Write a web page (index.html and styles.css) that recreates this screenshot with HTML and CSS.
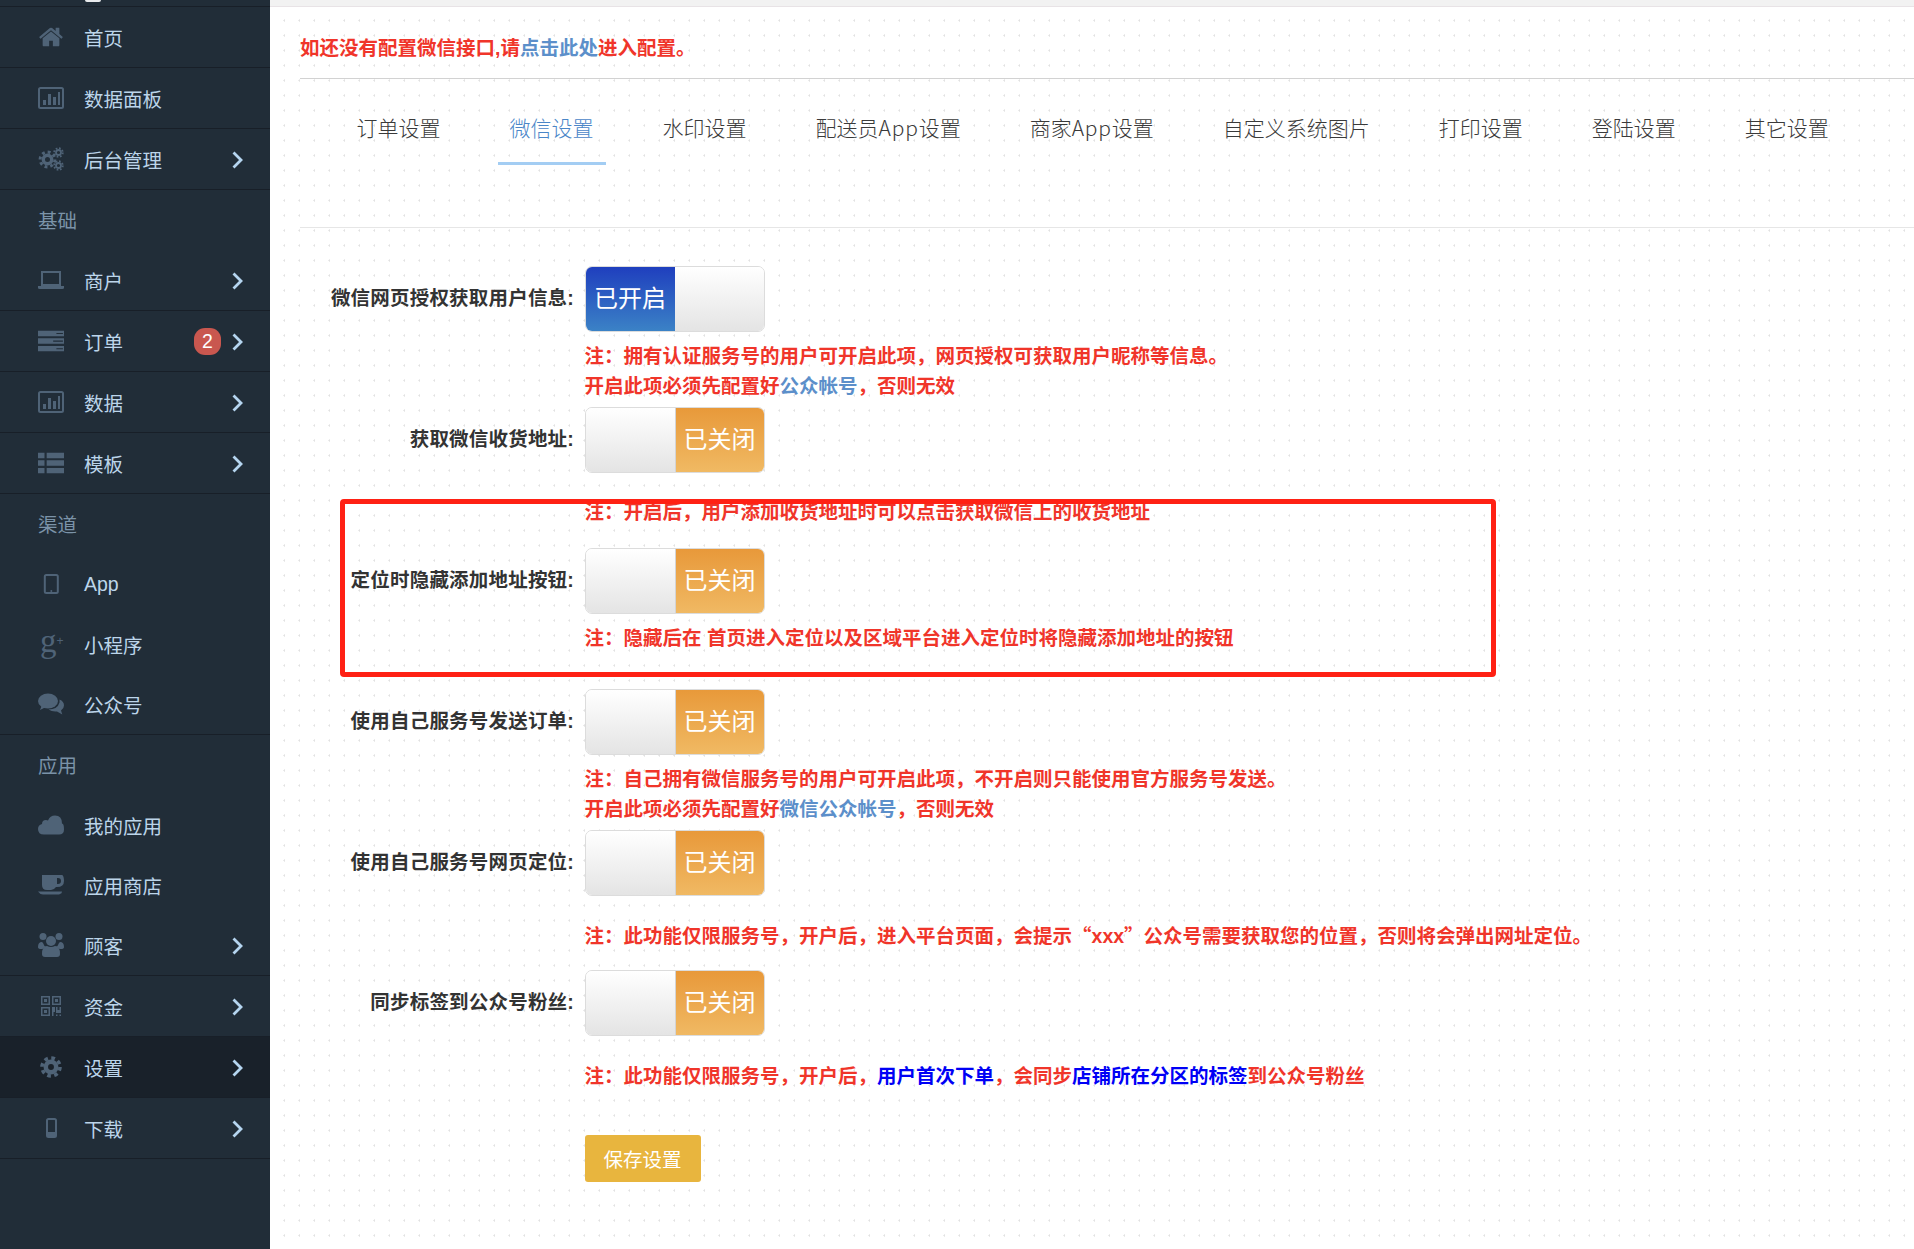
FILE: index.html
```html
<!DOCTYPE html>
<html lang="zh-CN">
<head>
<meta charset="utf-8">
<title>微信设置</title>
<link rel="stylesheet" href="styles.css">
</head>
<body>
<aside class="sidebar">
  <div class="side-top"><span class="avatar-sliver"></span></div>
  <a class="item b">
    <svg class="ico" viewBox="0 0 1792 1792"><path d="M1472 992v480q0 26-19 45t-45 19h-384v-384h-256v384h-384q-26 0-45-19t-19-45v-480q0-1 .5-3t.5-3l575-474 575 474q1 2 1 6zm223-69l-62 74q-8 9-21 11h-3q-13 0-21-7l-692-577-692 577q-12 8-24 7-13-2-21-11l-62-74q-8-10-7-23.5t11-21.5l719-599q32-26 76-26t76 26l244 204v-195q0-14 9-23t23-9h192q14 0 23 9t9 23v408l219 182q10 8 11 21.5t-7 23.5z"/></svg>
    <span>首页</span>
  </a>
  <a class="item b">
    <svg class="ico" viewBox="0 0 26 22"><rect x="1" y="1" width="24" height="20" rx="1.5" fill="none" stroke="currentColor" stroke-width="2"/><rect x="5" y="13" width="3" height="5"/><rect x="10" y="7" width="3" height="11"/><rect x="15" y="10" width="3" height="8"/><rect x="20" y="5" width="2" height="13"/></svg>
    <span>数据面板</span>
  </a>
  <a class="item b">
    <svg class="ico" viewBox="0 0 26 24"><g fill="none" stroke="currentColor"><circle cx="9.5" cy="12.5" r="4.2" stroke-width="3.4"/><circle cx="9.5" cy="12.5" r="7.4" stroke-width="3" stroke-dasharray="2.9 2.9"/><circle cx="20.500" cy="5.5" r="2.500" stroke-width="1.800"/><circle cx="20.500" cy="5.5" r="4.300" stroke-width="1.800" stroke-dasharray="1.700 1.680"/><circle cx="20.500" cy="18.5" r="2.500" stroke-width="1.800"/><circle cx="20.500" cy="18.5" r="4.300" stroke-width="1.800" stroke-dasharray="1.700 1.680"/></g></svg>
    <span>后台管理</span>
    <svg class="chev" viewBox="0 0 11 18"><polyline points="1.5,1.5 9,9 1.5,16.5"/></svg>
  </a>
  <div class="group-label">基础</div>
  <a class="item b">
    <svg class="ico" viewBox="0 0 26 18"><rect x="4" y="1" width="18" height="13" fill="none" stroke="currentColor" stroke-width="2"/><path d="M0 15h26v1.5q0 1.5-1.5 1.5h-23q-1.5 0-1.5-1.5z"/></svg>
    <span>商户</span>
    <svg class="chev" viewBox="0 0 11 18"><polyline points="1.5,1.5 9,9 1.5,16.5"/></svg>
  </a>
  <a class="item b">
    <svg class="ico" viewBox="0 0 24 19"><path d="M0 0h24v5h-24zM0 7h24v5h-24zM0 14h24v5h-24z"/><path d="M17 2.6h6M14 9.6h9M17 16.6h6" stroke="#212d38" stroke-width="1"/></svg>
    <span>订单</span>
    <span class="badge">2</span>
    <svg class="chev tight" viewBox="0 0 11 18"><polyline points="1.5,1.5 9,9 1.5,16.5"/></svg>
  </a>
  <a class="item b">
    <svg class="ico" viewBox="0 0 26 22"><rect x="1" y="1" width="24" height="20" rx="1.5" fill="none" stroke="currentColor" stroke-width="2"/><rect x="5" y="13" width="3" height="5"/><rect x="10" y="7" width="3" height="11"/><rect x="15" y="10" width="3" height="8"/><rect x="20" y="5" width="2" height="13"/></svg>
    <span>数据</span>
    <svg class="chev" viewBox="0 0 11 18"><polyline points="1.5,1.5 9,9 1.5,16.5"/></svg>
  </a>
  <a class="item b">
    <svg class="ico" viewBox="0 0 24 19"><path d="M0 0h6v5h-6zM8 0h16v5h-16zM0 7h6v5h-6zM8 7h16v5h-16zM0 14h6v5h-6zM8 14h16v5h-16z"/></svg>
    <span>模板</span>
    <svg class="chev" viewBox="0 0 11 18"><polyline points="1.5,1.5 9,9 1.5,16.5"/></svg>
  </a>
  <div class="group-label">渠道</div>
  <a class="item">
    <svg class="ico" viewBox="0 0 26 20"><rect x="6.8" y="1" width="13" height="18" rx="1.5" fill="none" stroke="currentColor" stroke-width="2"/><circle cx="13.3" cy="17" r="1"/></svg>
    <span>App</span>
  </a>
  <a class="item">
    <span class="gplus">g<small>+</small></span>
    <span>小程序</span>
  </a>
  <a class="item b">
    <svg class="ico" viewBox="0 0 26 22"><ellipse cx="10" cy="8" rx="10" ry="7.5"/><path d="M4 12l-2 5 6-3z"/><path d="M21.5 6.6q4.5 2 4.5 5.9 0 3-3 5l1.300 4-5.300-3q-5 .5-8.500-2 9 0 11-7z"/></svg>
    <span>公众号</span>
  </a>
  <div class="group-label">应用</div>
  <a class="item">
    <svg class="ico" viewBox="0 0 26 20"><path d="M6 19.500q-6 0-6-5.500 0-4 4-5 0-4 4-4 1 0 2 .5 2-5 7-5 7 0 7 8 2 0 2 6 0 5-5 5z"/></svg>
    <span>我的应用</span>
  </a>
  <a class="item">
    <svg class="ico" viewBox="0 0 26 20"><path fill-rule="evenodd" d="M4 0h20q1 0 1.500 2t.500 4q0 6-7 6h-1q-2 3-5 3h-4q-5 0-5-5zM19 3v6h1q3 0 3-3t-3-3z"/><path d="M0 16.500h24q0 2-2 2.500-1 .500-2 .500h-15q-3 0-5-3z"/></svg>
    <span>应用商店</span>
  </a>
  <a class="item b">
    <svg class="ico" viewBox="0 0 26 24"><circle cx="5" cy="3.500" r="3.500"/><circle cx="21" cy="3.500" r="3.500"/><circle cx="13" cy="8" r="5"/><path d="M0 14q0-5 4-5l1 1q1 3 3 4-3 1-3.500 2-4.500.500-4.500-2zM26 14q0-5-4-5l-1 1q-1 3-3 4 3 1 3.500 2 4.500.500 4.500-2z"/><path d="M4 21q0-8 5-8 4 2 8 0 5 0 5 8 0 3-3 3h-12q-3 0-3-3z"/></svg>
    <span>顾客</span>
    <svg class="chev" viewBox="0 0 11 18"><polyline points="1.5,1.5 9,9 1.5,16.5"/></svg>
  </a>
  <a class="item b">
    <svg class="ico qr" viewBox="0 0 20 20"><path fill-rule="evenodd" d="M0 0h9v9h-9zM1.500 1.500v6h6v-6zM11 0h9v9h-9zM12.500 1.500v6h6v-6zM0 11h9v9h-9zM1.500 12.500v6h6v-6zM3 3h3v3h-3zM14 3h3v3h-3zM3 14h3v3h-3zM11 11h3v5h-1.500v4h-1.500zM15 11h1.500v3h2v-3h1.500v6h-5zM15 18.500h1.500v1.500h-1.500zM18.500 18.500h1.500v1.500h-1.500z"/></svg>
    <span>资金</span>
    <svg class="chev" viewBox="0 0 11 18"><polyline points="1.5,1.5 9,9 1.5,16.5"/></svg>
  </a>
  <a class="item b active">
    <svg class="ico" viewBox="0 0 26 22"><g fill="none" stroke="currentColor"><circle cx="13" cy="11" r="5.200" stroke-width="4.500"/><circle cx="13" cy="11" r="9" stroke-width="3.600" stroke-dasharray="3.700 3.370"/></g></svg>
    <span>设置</span>
    <svg class="chev" viewBox="0 0 11 18"><polyline points="1.5,1.5 9,9 1.5,16.5"/></svg>
  </a>
  <a class="item b">
    <svg class="ico" viewBox="0 0 26 20"><rect x="9" y="1" width="9" height="18" rx="1.500" fill="none" stroke="currentColor" stroke-width="2"/><rect x="9" y="14" width="9" height="5" rx="1"/></svg>
    <span>下载</span>
    <svg class="chev" viewBox="0 0 11 18"><polyline points="1.5,1.5 9,9 1.5,16.5"/></svg>
  </a>
</aside>

<main class="main">
  <div class="strip"></div>
  <div class="content">
    <p class="notice">如还没有配置微信接口,请<a class="link">点击此处</a>进入配置。</p>
    <nav class="tabs">
      <a class="tab">订单设置</a>
      <a class="tab on">微信设置</a>
      <a class="tab">水印设置</a>
      <a class="tab">配送员<span class="lat">App</span>设置</a>
      <a class="tab">商家<span class="lat">App</span>设置</a>
      <a class="tab">自定义系统图片</a>
      <a class="tab">打印设置</a>
      <a class="tab">登陆设置</a>
      <a class="tab">其它设置</a>
    </nav>
    <form class="form">
      <div class="group">
        <label class="lab">微信网页授权获取用户信息:</label>
        <div class="switch"><span class="seg on-seg">已开启</span><span class="seg blank"></span></div>
        <div class="note"><p>注&#xFF1A;拥有认证服务号的用户可开启此项&#xFF0C;网页授权可获取用户昵称等信息。</p><p>开启此项必须先配置好<a class="link">公众帐号</a>&#xFF0C;否则无效</p></div>
      </div>
      <div class="group">
        <label class="lab">获取微信收货地址:</label>
        <div class="switch"><span class="seg blank off-blank"></span><span class="seg off-seg">已关闭</span></div>
        <div class="note gap"><p>注&#xFF1A;开启后&#xFF0C;用户添加收货地址时可以点击获取微信上的收货地址</p></div>
      </div>
      <div class="group">
        <label class="lab">定位时隐藏添加地址按钮:</label>
        <div class="switch"><span class="seg blank off-blank"></span><span class="seg off-seg">已关闭</span></div>
        <div class="note"><p>注&#xFF1A;隐藏后在 首页进入定位以及区域平台进入定位时将隐藏添加地址的按钮</p></div>
      </div>
      <div class="group">
        <label class="lab">使用自己服务号发送订单:</label>
        <div class="switch"><span class="seg blank off-blank"></span><span class="seg off-seg">已关闭</span></div>
        <div class="note"><p>注&#xFF1A;自己拥有微信服务号的用户可开启此项&#xFF0C;不开启则只能使用官方服务号发送。</p><p>开启此项必须先配置好<a class="link">微信公众帐号</a>&#xFF0C;否则无效</p></div>
      </div>
      <div class="group">
        <label class="lab">使用自己服务号网页定位:</label>
        <div class="switch"><span class="seg blank off-blank"></span><span class="seg off-seg">已关闭</span></div>
        <div class="note gap"><p>注&#xFF1A;此功能仅限服务号&#xFF0C;开户后&#xFF0C;进入平台页面&#xFF0C;会提示<span class="cjk">&#x201C;</span>xxx<span class="cjk">&#x201D;</span>公众号需要获取您的位置&#xFF0C;否则将会弹出网址定位。</p></div>
      </div>
      <div class="group">
        <label class="lab">同步标签到公众号粉丝:</label>
        <div class="switch"><span class="seg blank off-blank"></span><span class="seg off-seg">已关闭</span></div>
        <div class="note gap"><p>注&#xFF1A;此功能仅限服务号&#xFF0C;开户后&#xFF0C;<span class="pure">用户首次下单</span>&#xFF0C;会同步<span class="pure">店铺所在分区的标签</span>到公众号粉丝</p></div>
      </div>
      <button class="save" type="button">保存设置</button>
    </form>
  </div>
  <div class="callout"></div>
</main>
</body>
</html>
```

FILE: styles.css
```css
* { box-sizing: border-box; }
html, body { height: 100%; }
body {
  margin: 0;
  display: flex;
  height: 1249px;
  overflow: hidden;
  font-family: "Liberation Sans", "Noto Sans CJK SC", sans-serif;
  font-size: 19.5px;
  background: #fff;
}
p { margin: 0; }

/* sidebar */
.sidebar {
  width: 270px;
  flex: none;
  background: #212d38;
  color: #bcd5ea;
}
.side-top {
  height: 7px;
  border-bottom: 1px solid #181f28;
  overflow: hidden;
}
.avatar-sliver {
  display: block;
  width: 16px;
  height: 2px;
  margin-left: 85px;
  background: #e8eaec;
  border-radius: 0 0 8px 8px;
}
.item {
  display: flex;
  align-items: center;
  height: 60px;
  padding-left: 38px;
  padding-right: 27px;
}
.item.b {
  height: 61px;
  border-bottom: 1px solid #181f28;
}
.item.active { background: #19212a; }
.group-label {
  display: flex;
  align-items: center;
  height: 60px;
  padding-left: 38px;
  padding-bottom: 1px;
  color: #7b93a8;
}
.ico {
  width: 26px;
  height: 26px;
  flex: none;
  margin-right: 20px;
  fill: #4f6377;
  color: #4f6377;
}
.ico.qr { width: 20px; height: 20px; margin-left: 3px; margin-right: 23px; }
.gplus {
  width: 26px;
  height: 26px;
  flex: none;
  margin-right: 20px;
  padding-left: 2px;
  font-family: "Liberation Serif", serif;
  font-size: 33px;
  line-height: 20px;
  color: #4f6377;
  white-space: nowrap;
}
.gplus small {
  font-family: "Liberation Sans", sans-serif;
  font-size: 12px;
  vertical-align: 7px;
}
.chev {
  width: 11px;
  height: 18px;
  flex: none;
  margin-left: auto;
  margin-top: 2px;
  fill: none;
  stroke: #b5d5f0;
  stroke-width: 2.8;
}
.chev.tight { margin-left: 11px; }
.badge {
  margin-left: auto;
  margin-top: 1px;
  width: 27px;
  height: 27px;
  border-radius: 11px;
  background: #c9574f;
  color: #fff;
  font-size: 19.5px;
  line-height: 27px;
  text-align: center;
}

/* main */
.main {
  position: relative;
  flex: 1;
  min-width: 0;
  background-color: #fff;
  background-image: radial-gradient(circle at 14.5px 5.5px, #e2e2e2 0.9px, transparent 1.2px);
  background-size: 15px 15px;
}
.strip {
  height: 7px;
  background: #f2f2f2;
  border-bottom: 1px solid #e8e3e6;
}
.content { padding-left: 30px; }
.notice {
  margin-top: 26px;
  padding-bottom: 15px;
  line-height: 30px;
  font-weight: 700;
  color: #f0352a;
  border-bottom: 1.5px solid #d2d2d2;
}
.link { color: #5c8fca; }
.tabs {
  display: flex;
  gap: 45px;
  padding: 33px 0 62px 44.5px;
  border-bottom: 1px solid #e6e6e6;
  font-family: "Noto Sans CJK SC", sans-serif;
}
.tab {
  padding: 0 12px 20px;
  line-height: 30px;
  font-size: 21px;
  font-weight: 300;
  color: #3a3a3a;
  border-bottom: 3px solid transparent;
  white-space: nowrap;
}
.lat { letter-spacing: 0.8px; }
.tab.on {
  color: #4a86c8;
  border-bottom-color: #a3cdf3;
}
.form { padding-top: 38px; }
.group {
  display: grid;
  grid-template-columns: 274px 180px;
  column-gap: 10.5px;
  align-content: start;
  min-height: 140.9px;
}
.lab {
  height: 65px;
  line-height: 65px;
  text-align: right;
  font-weight: 700;
  letter-spacing: 0.2px;
  color: #333;
  white-space: nowrap;
}
.switch {
  display: flex;
  width: 180px;
  height: 66px;
  border: 1px solid #dcdcdc;
  border-radius: 7px;
  overflow: hidden;
}
.seg {
  display: flex;
  align-items: center;
  justify-content: center;
  padding-bottom: 5px;
  color: #fff;
  font-size: 24px;
}
.on-seg { width: 89px; background: linear-gradient(#1f3fbe, #3b82c6); }
.off-seg { flex: 1; background: linear-gradient(#e8993a, #f0b963); }
.blank { flex: 1; background: linear-gradient(#fff, #e4e4e4); }
.off-blank { flex: none; width: 90px; border-right: 1px solid #d4d4d4; }
.note {
  grid-column: 2 / 4;
  margin-top: 9.2px;
  line-height: 30px;
  font-weight: 700;
  color: #f0352a;
  white-space: nowrap;
}
.note.gap { margin-top: 24.5px; }
.cjk { font-family: "Noto Sans CJK SC", sans-serif; }
.pure { color: #0000f5; }
.save {
  display: block;
  margin: 23.2px 0 0 284.5px;
  width: 116px;
  height: 47px;
  padding: 0;
  border: 0;
  border-radius: 3px;
  background: #e8b53e;
  color: #fff;
  font: inherit;
}
.callout {
  position: absolute;
  left: 70px;
  top: 499px;
  width: 1156px;
  height: 178px;
  border: 5px solid #ff2114;
  border-radius: 4px;
}
```
